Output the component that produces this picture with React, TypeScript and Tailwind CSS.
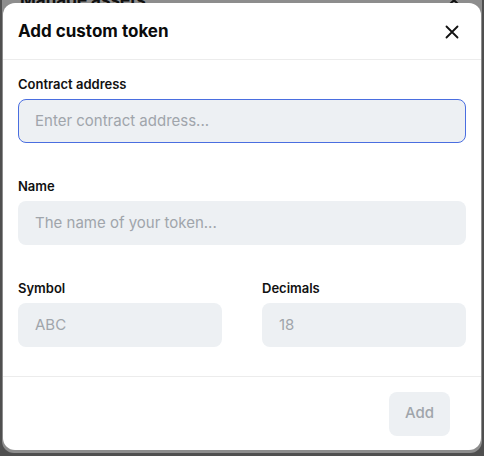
import React from "react";

function XIcon({ className = "" }: { className?: string }) {
  return (
    <svg className={className} viewBox="0 0 24 24" fill="none" stroke="currentColor" strokeWidth={2} strokeLinecap="round">
      <path d="M6 6l12 12M18 6L6 18" />
    </svg>
  );
}

function Field({ label, placeholder, focused = false }: { label: string; placeholder: string; focused?: boolean }) {
  return (
    <div className="flex flex-col">
      <label className="text-[13px] font-semibold text-[#111] leading-[16px] mb-[7px]">{label}</label>
      <div
        className={
          "h-[44px] rounded-[8px] bg-[#edf0f3] flex items-center px-[16px] text-[15px] text-[#a0a5ab] " +
          (focused ? "border border-[#4a6ee0]" : "border border-transparent")
        }
      >
        {placeholder}
      </div>
    </div>
  );
}

export default function App() {
  return (
    <div
      className="relative w-[484px] h-[456px] overflow-hidden bg-[#4f4f4f]"
      style={{ fontFamily: "Inter, 'Noto Sans', sans-serif" }}
    >
      {/* underlying dimmed modal */}
      <div className="absolute left-[2px] top-[-40px] w-[480px] h-[493px] rounded-[12px] bg-[#8d8d8d]">
        <div className="absolute left-[18px] top-[28px] text-[17px] font-bold text-[#111]">Manage assets</div>
        <XIcon className="absolute right-[17px] top-[29px] w-[22px] h-[22px] text-[#111]" />
      </div>
      {/* top modal */}
      <div className="absolute left-[3px] top-[3px] w-[478px] h-[447px] rounded-[12px] bg-white flex flex-col">
        <div className="h-[57px] flex items-center justify-between pt-[2px] pl-[15px] pr-[18px] border-b border-[#ececec]">
          <div className="text-[17px] font-bold text-[#0b0b0b]">Add custom token</div>
          <XIcon className="w-[22px] h-[22px] text-[#111]" />
        </div>
        <div className="flex flex-col px-[15px] pt-[16px] gap-[35px] flex-1">
          <Field label="Contract address" placeholder="Enter contract address..." focused />
          <Field label="Name" placeholder="The name of your token..." />
          <div className="grid grid-cols-2 gap-[40px]">
            <Field label="Symbol" placeholder="ABC" />
            <Field label="Decimals" placeholder="18" />
          </div>
        </div>
        <div className="h-[74px] border-t border-[#ececec] flex items-center justify-end pr-[31px]">
          <div className="w-[61px] h-[44px] rounded-[8px] bg-[#edf0f3] flex items-center justify-center text-[15px] font-medium text-[#a0a5ab]">
            Add
          </div>
        </div>
      </div>
    </div>
  );
}
